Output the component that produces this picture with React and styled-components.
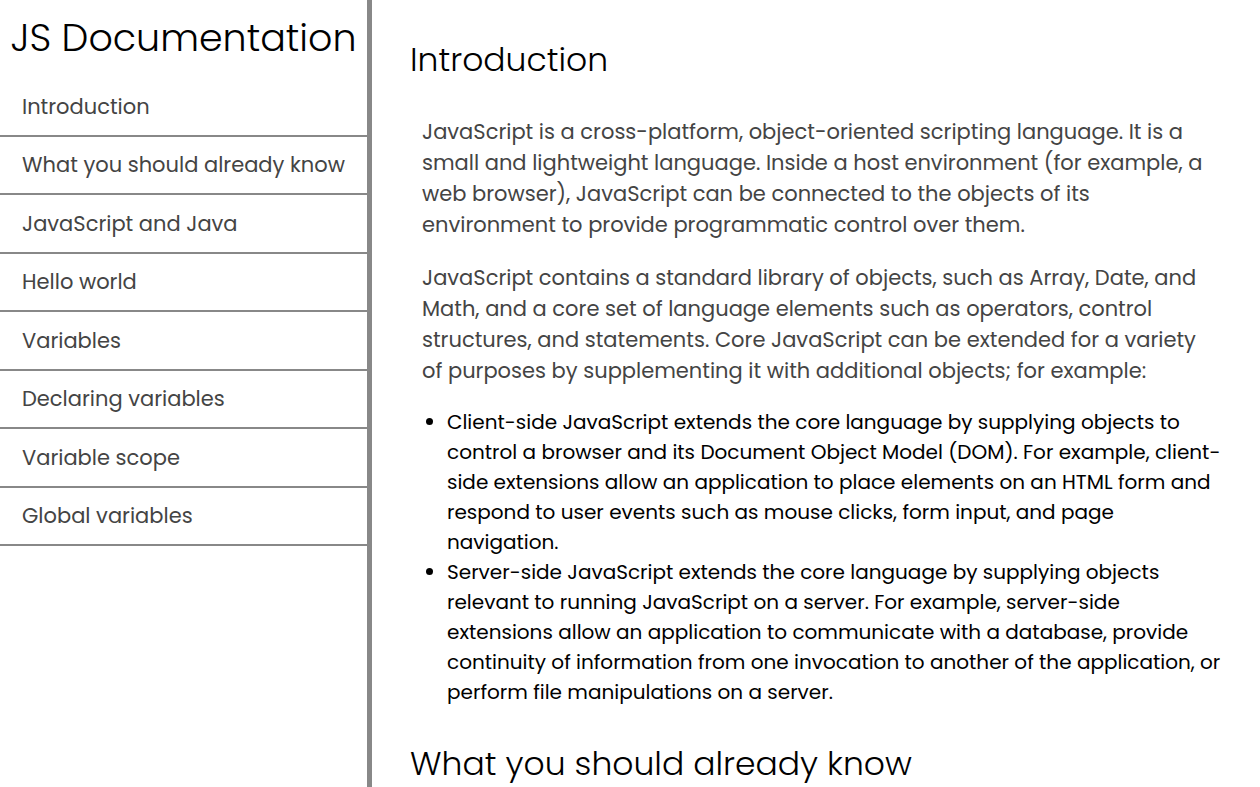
import React from 'react';
import styled, { createGlobalStyle } from 'styled-components';

const GlobalStyle = createGlobalStyle`
  * { box-sizing: border-box; }
  body {
    margin: 0;
    background: #fff;
    color: #000;
    font-family: Poppins, Inter, "Open Sans", sans-serif;
    font-size: 20px;
    font-weight: 400;
    line-height: 30px;
  }
`;

const Page = styled.div`
  display: grid;
  grid-template-columns: 372px minmax(0, 1fr);
`;

const Sidebar = styled.nav`
  position: sticky;
  top: 0;
  height: 100vh;
  border-right: 5px solid #888;
`;

const SiteTitle = styled.h1`
  margin: 0;
  padding: 8px 0 10px;
  font-size: 38px;
  font-weight: 300;
  line-height: 60px;
  text-align: center;
  white-space: nowrap;
`;

const NavList = styled.ul`
  display: grid;
  grid-auto-rows: 1fr;
  min-height: 468px;
  margin: 0;
  padding: 0;
  list-style: none;
`;

const NavItem = styled.li`
  display: grid;
  border-bottom: 2px solid #888;
`;

const NavLink = styled.a`
  display: flex;
  align-items: center;
  padding: 1px 0 0 22px;
  color: #444;
  font-size: 21px;
  line-height: 32px;
  text-decoration: none;
  white-space: nowrap;
`;

const Main = styled.main`
  padding: 35px 32px 0 38px;
`;

const Section = styled.section`
  margin-bottom: 32px;
`;

const Heading = styled.h2`
  margin: 0;
  font-size: 33px;
  font-weight: 300;
  line-height: 50px;
`;

const Paragraph = styled.p`
  margin: 22px 0 0;
  padding: 0 12px;
  color: #444;
  font-size: 21px;
  line-height: 31px;

  ${Heading} + & { margin-top: 31px; }
`;

const Bullets = styled.ul`
  margin: 21px 0 0;
  padding-left: 37px;
`;

const topics = [
  'Introduction',
  'What you should already know',
  'JavaScript and Java',
  'Hello world',
  'Variables',
  'Declaring variables',
  'Variable scope',
  'Global variables',
];

const anchor = (title) => title.replaceAll(' ', '_');

export default function App() {
  return (
    <>
      <GlobalStyle />
      <Page>
        <Sidebar aria-label="Documentation">
          <SiteTitle>JS Documentation</SiteTitle>
          <NavList>
            {topics.map((topic) => (
              <NavItem key={topic}>
                <NavLink href={`#${anchor(topic)}`}>{topic}</NavLink>
              </NavItem>
            ))}
          </NavList>
        </Sidebar>
        <Main>
          <Section id="Introduction">
            <Heading>Introduction</Heading>
            <Paragraph>
              JavaScript is a cross-platform, object-oriented scripting language. It is a
              small and lightweight language. Inside a host environment (for example, a
              web browser), JavaScript can be connected to the objects of its
              environment to provide programmatic control over them.
            </Paragraph>
            <Paragraph>
              JavaScript contains a standard library of objects, such as Array, Date, and
              Math, and a core set of language elements such as operators, control
              structures, and statements. Core JavaScript can be extended for a variety
              of purposes by supplementing it with additional objects; for example:
            </Paragraph>
            <Bullets>
              <li>
                Client-side JavaScript extends the core language by supplying objects to
                control a browser and its Document Object Model (DOM). For example,
                client-side extensions allow an application to place elements on an HTML
                form and respond to user events such as mouse clicks, form input, and page
                navigation.
              </li>
              <li>
                Server-side JavaScript extends the core language by supplying objects
                relevant to running JavaScript on a server. For example, server-side
                extensions allow an application to communicate with a database, provide
                continuity of information from one invocation to another of the
                application, or perform file manipulations on a server.
              </li>
            </Bullets>
          </Section>
          <Section id="What_you_should_already_know">
            <Heading>What you should already know</Heading>
          </Section>
        </Main>
      </Page>
    </>
  );
}
